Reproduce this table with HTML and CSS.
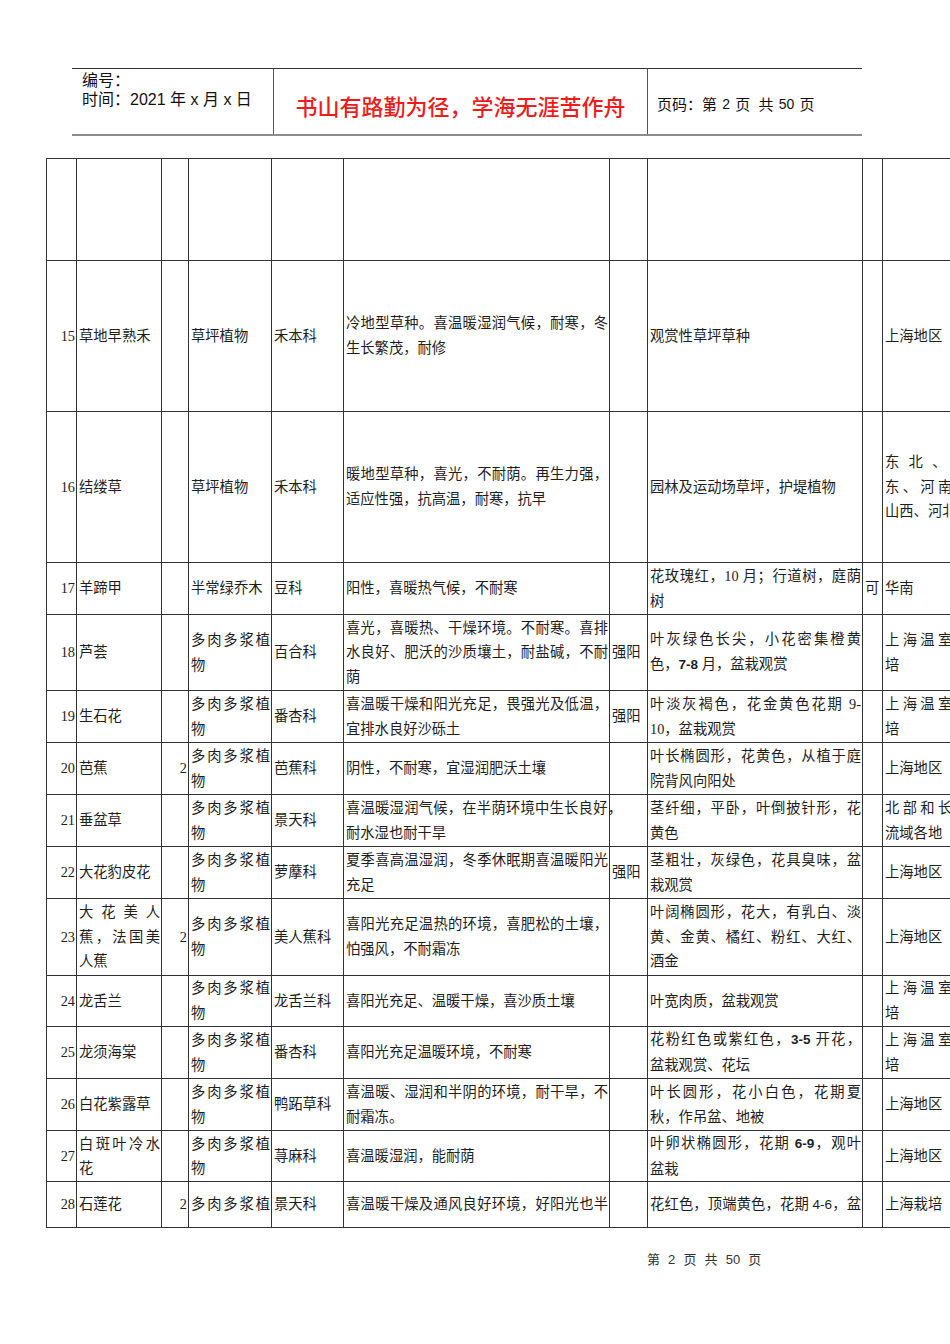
FILE: index.html
```html
<!DOCTYPE html>
<html lang="zh-CN">
<head>
<meta charset="utf-8">
<title>植物表 第2页</title>
<link rel="stylesheet" href="styles.css">
</head>
<body>
<div class="page">
  <div class="hdr">
    <div class="hdr-left">
      <div>编号：</div>
      <div>时间：2021 年 x 月 x 日</div>
    </div>
    <div class="hdr-mid">书山有路勤为径，学海无涯苦作舟</div>
    <div class="hdr-right">页码：第 <span class="sm">2</span> 页&nbsp; 共 <span class="sm">50</span> 页</div>
  </div>

  <table class="tbl">
    <colgroup>
      <col class="c1"><col class="c2"><col class="c3"><col class="c4"><col class="c5">
      <col class="c6"><col class="c7"><col class="c8"><col class="c9"><col class="c10">
    </colgroup>
    <tr class="h102"><td></td><td></td><td></td><td></td><td></td><td></td><td></td><td></td><td></td><td></td></tr>
    <tr class="h151">
      <td class="num">15</td><td>草地早熟禾</td><td class="num"></td><td>草坪植物</td><td>禾本科</td>
      <td><span class="j">冷地型草种。喜温暖湿润气候，耐寒，冬</span>生长繁茂，耐修</td>
      <td></td><td>观赏性草坪草种</td><td></td><td>上海地区</td>
    </tr>
    <tr class="h151">
      <td class="num">16</td><td>结缕草</td><td class="num"></td><td>草坪植物</td><td>禾本科</td>
      <td><span class="j">暖地型草种，喜光，不耐荫。再生力强，</span>适应性强，抗高温，耐寒，抗早</td>
      <td></td><td>园林及运动场草坪，护堤植物</td><td></td>
      <td class="clip"><span class="j">东北、山</span><span class="j">东、河南、</span>山西、河北</td>
    </tr>
    <tr class="h52">
      <td class="num">17</td><td>羊蹄甲</td><td class="num"></td><td>半常绿乔木</td><td>豆科</td>
      <td>阳性，喜暖热气候，不耐寒</td>
      <td></td><td><span class="j">花玫瑰红，10 月；行道树，庭荫</span>树</td><td>可</td><td>华南</td>
    </tr>
    <tr class="h76">
      <td class="num">18</td><td>芦荟</td><td class="num"></td><td><span class="j">多肉多浆植</span>物</td><td>百合科</td>
      <td><span class="j">喜光，喜暖热、干燥环境。不耐寒。喜排</span><span class="j">水良好、肥沃的沙质壤土，耐盐碱，不耐</span>荫</td>
      <td>强阳</td><td><span class="j">叶灰绿色长尖，小花密集橙黄</span>色，<span class="sb">7-8</span> 月，盆栽观赏</td><td></td>
      <td class="clip"><span class="j">上海温室栽</span>培</td>
    </tr>
    <tr class="h52">
      <td class="num">19</td><td>生石花</td><td class="num"></td><td><span class="j">多肉多浆植</span>物</td><td>番杏科</td>
      <td><span class="j">喜温暖干燥和阳光充足，畏强光及低温，</span>宜排水良好沙砾土</td>
      <td>强阳</td><td><span class="j">叶淡灰褐色，花金黄色花期 9-</span>10，盆栽观赏</td><td></td>
      <td class="clip"><span class="j">上海温室栽</span>培</td>
    </tr>
    <tr class="h52">
      <td class="num">20</td><td>芭蕉</td><td class="num">2</td><td><span class="j">多肉多浆植</span>物</td><td>芭蕉科</td>
      <td>阴性，不耐寒，宜湿润肥沃土壤</td>
      <td></td><td><span class="j">叶长椭圆形，花黄色，从植于庭</span>院背风向阳处</td><td></td><td>上海地区</td>
    </tr>
    <tr class="h52">
      <td class="num">21</td><td>垂盆草</td><td class="num"></td><td><span class="j">多肉多浆植</span>物</td><td>景天科</td>
      <td><span class="j">喜温暖湿润气候，在半荫环境中生长良好<span class="hang">，</span></span>耐水湿也耐干旱</td>
      <td></td><td><span class="j">茎纤细，平卧，叶倒披针形，花</span>黄色</td><td></td>
      <td class="clip"><span class="j">北部和长江</span>流域各地</td>
    </tr>
    <tr class="h52">
      <td class="num">22</td><td>大花豹皮花</td><td class="num"></td><td><span class="j">多肉多浆植</span>物</td><td>萝藦科</td>
      <td><span class="j">夏季喜高温湿润，冬季休眠期喜温暖阳光</span>充足</td>
      <td>强阳</td><td><span class="j">茎粗壮，灰绿色，花具臭味，盆</span>栽观赏</td><td></td><td>上海地区</td>
    </tr>
    <tr class="h77">
      <td class="num">23</td><td><span class="j">大花美人</span><span class="j">蕉，法国美</span>人蕉</td><td class="num">2</td><td><span class="j">多肉多浆植</span>物</td><td>美人蕉科</td>
      <td><span class="j">喜阳光充足温热的环境，喜肥松的土壤，</span>怕强风，不耐霜冻</td>
      <td></td><td><span class="j">叶阔椭圆形，花大，有乳白、淡</span><span class="j">黄、金黄、橘红、粉红、大红、</span>酒金</td><td></td><td>上海地区</td>
    </tr>
    <tr class="h51">
      <td class="num">24</td><td>龙舌兰</td><td class="num"></td><td><span class="j">多肉多浆植</span>物</td><td>龙舌兰科</td>
      <td>喜阳光充足、温暖干燥，喜沙质土壤</td>
      <td></td><td>叶宽肉质，盆栽观赏</td><td></td>
      <td class="clip"><span class="j">上海温室栽</span>培</td>
    </tr>
    <tr class="h52">
      <td class="num">25</td><td>龙须海棠</td><td class="num"></td><td><span class="j">多肉多浆植</span>物</td><td>番杏科</td>
      <td>喜阳光充足温暖环境，不耐寒</td>
      <td></td><td><span class="j">花粉红色或紫红色，<span class="sb">3-5</span> 开花，</span>盆栽观赏、花坛</td><td></td>
      <td class="clip"><span class="j">上海温室栽</span>培</td>
    </tr>
    <tr class="h52">
      <td class="num">26</td><td>白花紫露草</td><td class="num"></td><td><span class="j">多肉多浆植</span>物</td><td>鸭跖草科</td>
      <td><span class="j">喜温暖、湿润和半阴的环境，耐干旱，不</span>耐霜冻。</td>
      <td></td><td><span class="j">叶长圆形，花小白色，花期夏</span>秋，作吊盆、地被</td><td></td><td>上海地区</td>
    </tr>
    <tr class="h51">
      <td class="num">27</td><td><span class="j">白斑叶冷水</span>花</td><td class="num"></td><td><span class="j">多肉多浆植</span>物</td><td>荨麻科</td>
      <td>喜温暖湿润，能耐荫</td>
      <td></td><td><span class="j">叶卵状椭圆形，花期 <span class="sb">6-9</span>，观叶</span>盆栽</td><td></td><td>上海地区</td>
    </tr>
    <tr class="h46">
      <td class="num">28</td><td>石莲花</td><td class="num">2</td><td><span class="j">多肉多浆植</span></td><td>景天科</td>
      <td><span class="j">喜温暖干燥及通风良好环境，好阳光也半</span></td>
      <td></td><td><span class="j">花红色，顶端黄色，花期 <span class="sn">4-6</span>，盆</span></td><td></td><td>上海栽培</td>
    </tr>
  </table>

  <div class="foot">第 2 页 共 50 页</div>
</div>
</body>
</html>
```

FILE: styles.css
```css
html, body {
  margin: 0;
  padding: 0;
  overflow: hidden;
  background: #fff;
}

body {
  width: 950px;
  height: 1344px;
  font-family: "Liberation Serif", "Noto Sans CJK SC", serif;
  color: #1e1e1e;
}

.page {
  padding-top: 68px;
}

/* ---------- header ---------- */
.hdr {
  display: flex;
  margin-left: 72px;
  width: 790px;
  height: 65px;
  border-top: 1px solid #333;
  border-bottom: 2px solid #8c8c8c;
}

.hdr-left {
  box-sizing: border-box;
  width: 202px;
  border-right: 1px solid #555;
  padding: 2px 0 0 10px;
  font-family: "Liberation Sans", "Noto Sans CJK SC", sans-serif;
  font-size: 16px;
  line-height: 19px;
  color: #111;
}

.hdr-mid {
  box-sizing: border-box;
  width: 374px;
  border-right: 1px solid #555;
  display: flex;
  align-items: center;
  justify-content: center;
  padding-top: 6px;
  font-family: "Noto Sans CJK SC", sans-serif;
  font-size: 22px;
  font-weight: 500;
  color: #ee1c1c;
}

.hdr-right {
  flex: 1;
  display: flex;
  align-items: center;
  padding-left: 9px;
  padding-top: 4px;
  font-family: "Liberation Sans", "Noto Sans CJK SC", sans-serif;
  font-size: 15px;
  color: #111;
  white-space: pre;
}

.hdr-right .sm {
  font-size: 14px;
  margin: 0 1px;
}

/* ---------- table ---------- */
.tbl {
  margin-top: 22px;
  margin-left: 46px;
  border-collapse: collapse;
  table-layout: fixed;
  width: 925px;
}

.c1 { width: 30px; }
.c2 { width: 85px; }
.c3 { width: 27px; }
.c4 { width: 83px; }
.c5 { width: 72px; }
.c6 { width: 266px; }
.c7 { width: 38px; }
.c8 { width: 215px; }
.c9 { width: 20px; }
.c10 { width: 89px; }

.tbl td {
  border: 1px solid #333;
  padding: 0 1px 0 2px;
  font-size: 14.3px;
  line-height: 24.6px;
  vertical-align: middle;
  white-space: nowrap;
  text-align: left;
}

.tbl td.num {
  text-align: right;
  padding: 0 1px 0 0;
}

.h102 { height: 102px; }
.h151 { height: 151px; }
.h52 { height: 52px; }
.h51 { height: 51px; }
.h76 { height: 76px; }
.h77 { height: 77px; }
.h46 { height: 46px; }

.j {
  display: block;
  text-align: justify;
  text-align-last: justify;
}

.hang {
  margin-right: -14px;
}

.sb {
  font-family: "Liberation Sans", sans-serif;
  font-weight: bold;
  font-size: 13.5px;
}

.sn {
  font-family: "Liberation Sans", sans-serif;
  font-size: 13.5px;
}

/* ---------- footer ---------- */
.foot {
  margin-top: 21px;
  padding-left: 647px;
  font-family: "Liberation Sans", "Noto Sans CJK SC", sans-serif;
  font-size: 13px;
  word-spacing: 4.5px;
  color: #333;
}
```
